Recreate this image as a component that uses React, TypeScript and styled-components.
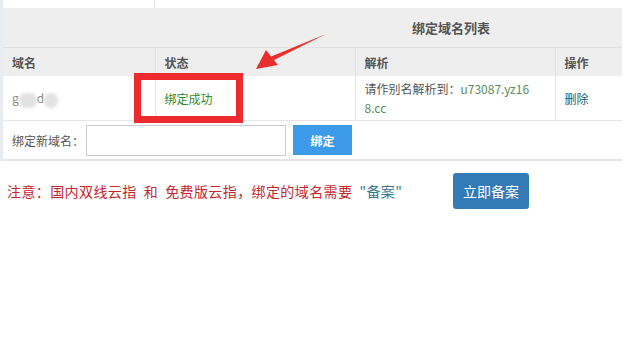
import { FC } from "react";
import styled, { createGlobalStyle } from "styled-components";

const GlobalStyle = createGlobalStyle`
  body {
    margin: 0;
    background: #ffffff;
    font-family: "Noto Sans CJK SC", "Noto Sans", sans-serif;
    color: #555555;
  }
`;

const Page = styled.div`
  position: relative;
  width: 628px;
  height: 341px;
  overflow: hidden;
  background: #ffffff;
`;

const TopStrip = styled.div`
  height: 8px;
  display: flex;
  border-left: 3px solid #e9edf2;
`;

const StripCell = styled.div`
  width: 151px;
  border-right: 1px solid #e2e2e2;
`;

const Panel = styled.div`
  width: 619px;
  border-left: 3px solid #e9edf2;
`;

const Table = styled.table`
  width: 100%;
  border-collapse: collapse;
  font-size: 12px;
  table-layout: fixed;
`;

const TitleCell = styled.th`
  height: 39px;
  background: #eeeeee;
  padding: 0 0 0 409px;
  text-align: left;
  font-size: 13px;
  font-weight: 600;
  color: #555555;
`;

const HeadCell = styled.th`
  height: 28px;
  background: #eeeeee;
  border-top: 1px solid #e0e0e0;
  border-left: 1px solid #e2e2e2;
  padding: 0 0 0 9px;
  text-align: left;
  font-size: 12px;
  font-weight: 600;
  color: #555555;
  &:first-child {
    border-left: none;
  }
`;

const Cell = styled.td`
  height: 44px;
  border-left: 1px solid #e6e6e6;
  border-bottom: 1px solid #e6e6e6;
  padding: 0 0 0 9px;
  font-size: 12px;
  color: #555555;
  line-height: 19px;
  &:first-child {
    border-left: none;
  }
`;

const Blur = styled.span<{ $w: number }>`
  display: inline-block;
  width: ${(p) => p.$w}px;
  height: 15px;
  vertical-align: middle;
  background: #e2e2e2;
  border-radius: 7px;
  filter: blur(1.5px);
`;

const Faded = styled.span`
  color: #8a8a8a;
`;

const Success = styled.span`
  color: #2f8a2a;
`;

const Target = styled.span`
  color: #5c8a5c;
`;

const Delete = styled.span`
  color: #22607a;
`;

const BindRow = styled.div`
  height: 38px;
  display: flex;
  align-items: center;
  padding-left: 9px;
  border-bottom: 2px solid #e4e6e9;
  font-size: 12px;
  color: #555555;
`;

const BindLabel = styled.span`
  width: 74px;
`;

const Input = styled.input`
  box-sizing: border-box;
  width: 200px;
  height: 31px;
  border: 1px solid #cccccc;
  margin: 0;
`;

const BindButton = styled.button`
  margin-left: 7px;
  width: 59px;
  height: 30px;
  border: none;
  background: #3d9ae8;
  color: #ffffff;
  font-family: inherit;
  font-size: 12px;
  font-weight: 700;
`;

const Notice = styled.div`
  display: flex;
  align-items: center;
  padding: 12px 0 0 7px;
`;

const NoticeText = styled.span`
  width: 446px;
  font-size: 14px;
  letter-spacing: 0.4px;
  color: #c3272d;
  white-space: pre;
`;

const Quote = styled.span`
  color: #3a7890;
`;

const FileButton = styled.button`
  width: 76px;
  height: 36px;
  border: none;
  border-radius: 3px;
  background: #337ab7;
  color: #ffffff;
  font-family: inherit;
  font-size: 14px;
`;

const Highlight = styled.div`
  position: absolute;
  left: 134px;
  top: 73px;
  width: 109px;
  height: 50px;
  box-sizing: border-box;
  border: 7px solid #ec2b2e;
`;

const Arrow = styled.svg`
  position: absolute;
  left: 240px;
  top: 25px;
`;

const App: FC = () => {
  return (
    <Page>
      <GlobalStyle />
      <TopStrip>
        <StripCell />
      </TopStrip>
      <Panel>
        <Table>
          <colgroup>
            <col style={{ width: 152 }} />
            <col style={{ width: 200 }} />
            <col style={{ width: 200 }} />
            <col />
          </colgroup>
          <thead>
            <tr>
              <TitleCell colSpan={4}>绑定域名列表</TitleCell>
            </tr>
            <tr>
              <HeadCell>域名</HeadCell>
              <HeadCell>状态</HeadCell>
              <HeadCell>解析</HeadCell>
              <HeadCell>操作</HeadCell>
            </tr>
          </thead>
          <tbody>
            <tr>
              <Cell>
                <Faded>g</Faded>
                <Blur $w={18} />
                <Faded>d</Faded>
                <Blur $w={14} />
              </Cell>
              <Cell>
                <Success>绑定成功</Success>
              </Cell>
              <Cell>
                请作别名解析到：<Target>u73087.yz16</Target>
                <br />
                <Target>8.cc</Target>
              </Cell>
              <Cell>
                <Delete>删除</Delete>
              </Cell>
            </tr>
          </tbody>
        </Table>
        <BindRow>
          <BindLabel>绑定新域名：</BindLabel>
          <Input type="text" />
          <BindButton>绑定</BindButton>
        </BindRow>
      </Panel>
      <Notice>
        <NoticeText>
          注意：国内双线云指  和  免费版云指，绑定的域名需要  <Quote>"备案"</Quote>
        </NoticeText>
        <FileButton>立即备案</FileButton>
      </Notice>
      <Highlight />
      <Arrow width="100" height="55" viewBox="0 0 100 55">
        <path d="M86 9 L32 36 L30 32 Z" fill="#ea2e2e" />
        <path d="M16 44 L26 25 L38 40 Z" fill="#ea2e2e" />
      </Arrow>
    </Page>
  );
};

export default App;
